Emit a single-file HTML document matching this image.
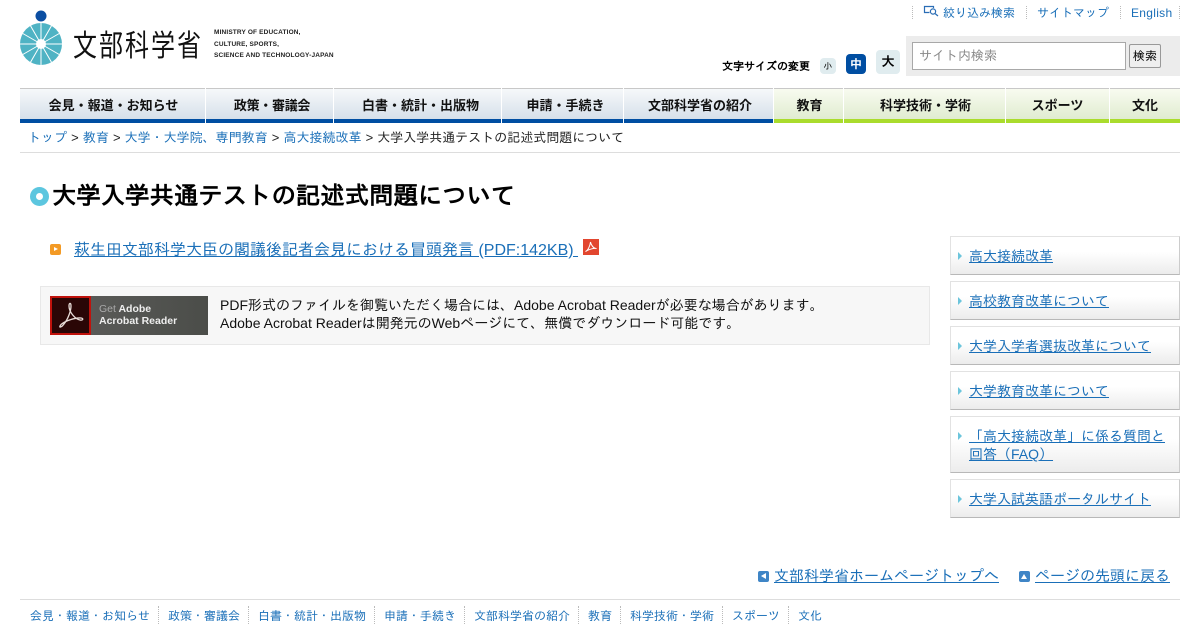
<!DOCTYPE html>
<html lang="ja"><head><meta charset="utf-8"><title>大学入学共通テストの記述式問題について</title>
<style>
*{box-sizing:border-box}
html,body{margin:0;padding:0;background:#fff}
body{width:1200px;height:630px;position:relative;overflow:hidden;font-family:"Liberation Sans","IPAGothic","Noto Sans CJK JP",sans-serif;color:#000}
.a{position:absolute;white-space:nowrap}
a{color:#1a6fb8;text-decoration:underline}
.c{text-decoration:none}
.n{position:absolute;top:88px;height:35px;text-align:center;font-family:"Liberation Sans","Noto Sans CJK JP",sans-serif;font-weight:bold;font-size:13px;line-height:33px;color:#111;border-top:1px solid #c8c8c8;border-bottom:4px solid #004ea2;background:linear-gradient(#f6f8fa,#d6e0ea)}
.g{border-bottom-color:#aadc2d;background:linear-gradient(#f8fbf0,#e0ecd0)}
.s{position:absolute;left:950px;width:230px;border:1px solid #e2e2e2;border-right-color:#ccc;border-bottom:1px solid #b8b8b8;background:linear-gradient(#fff 40%,#ececec);font-size:14px;line-height:18px;padding-left:18px;padding-right:8px;padding-top:10px}
.s:before{content:"";position:absolute;left:7px;top:15px;width:0;height:0;border-left:4px solid #6cc5dc;border-top:4px solid transparent;border-bottom:4px solid transparent}
.f{position:absolute;top:607px;font-size:12px;line-height:18px;white-space:nowrap;color:#1a6fb8}
.d{position:absolute;border-left:1px dotted #bbb}
</style></head><body>

<svg class="a" style="left:18px;top:8px" width="48" height="60" viewBox="18 8 48 60">
<circle cx="41" cy="16" r="5.500" fill="#0b4ea2"/>
<circle cx="41" cy="44" r="21" fill="#4fb3c4"/>
<g stroke="#fff" stroke-width="1">
<path d="M41 23V65M20 44H62M30.500 25.800 51.500 62.200M51.500 25.800 30.500 62.200M22.800 33.500 59.200 54.500M59.200 33.500 22.800 54.500"/></g>
<circle cx="41" cy="44" r="5" fill="#fff"/>
</svg>
<div class="a" style="left:73px;top:22px;font-size:30px;line-height:42px;letter-spacing:2.500px;transform:scaleX(.8);transform-origin:0 0;font-family:'Noto Sans CJK JP',sans-serif;color:#111">文部科学省</div>
<div class="a" style="left:214px;top:27px;font-size:6.500px;line-height:11.500px;font-weight:bold;letter-spacing:.15px;color:#222">MINISTRY OF EDUCATION,<br>CULTURE, SPORTS,<br>SCIENCE AND TECHNOLOGY-JAPAN</div>

<div class="d" style="left:912px;top:6px;height:13px"></div>
<div class="d" style="left:1026px;top:6px;height:13px"></div>
<div class="d" style="left:1120px;top:6px;height:13px"></div>
<div class="d" style="left:1179px;top:6px;height:13px"></div>
<svg class="a" style="left:923px;top:5px" width="18" height="13" viewBox="0 0 18 13" fill="none" stroke="#2a6db5" stroke-width="1.200"><path d="M6.500 7.500H1.500V1.500H10.500V3"/><circle cx="10" cy="6.500" r="2.600"/><path d="M12 8.500 15 11"/></svg>
<div class="a" style="left:943px;top:5px;font-size:12px;line-height:16px;color:#1a6fb8">絞り込み検索</div>
<div class="a" style="left:1037px;top:5px;font-size:12px;line-height:16px;color:#1a6fb8">サイトマップ</div>
<div class="a" style="left:1131px;top:5px;font-size:12px;letter-spacing:.3px;line-height:16px;color:#1a6fb8">English</div>

<div class="a" style="left:722px;top:59px;font-size:11px;line-height:16px;font-weight:bold">文字サイズの変更</div>
<div class="a" style="left:820px;top:58px;width:16px;height:16px;border-radius:4px;background:#e0ecef;font-size:9px;line-height:16px;text-align:center">小</div>
<div class="a" style="left:846px;top:54px;width:20px;height:20px;border-radius:4px;background:#004ea2;color:#fff;font-size:12px;font-weight:bold;line-height:20px;text-align:center">中</div>
<div class="a" style="left:876px;top:50px;width:24px;height:24px;border-radius:4px;background:#e0ecef;font-size:13px;font-weight:bold;line-height:24px;text-align:center">大</div>
<div class="a" style="left:906px;top:36px;width:274px;height:40px;background:#ececec"></div>
<div class="a" style="left:912px;top:42px;width:214px;height:28px;background:#fff;border:1px solid #a8a8a8;font-size:13px;line-height:26px;padding-left:6px;color:#8a8a8a">サイト内検索</div>
<div class="a" style="left:1129px;top:44px;width:32px;height:24px;background:#efefef;border:1px solid #999;border-radius:2px;font-size:12px;line-height:22px;text-align:center">検索</div>

<div class="n" style="left:20px;width:185px;padding-left:2px">会見・報道・お知らせ</div>
<div class="n" style="left:206px;width:127px;padding-left:5px;letter-spacing:-.3px">政策・審議会</div>
<div class="n" style="left:334px;width:167px;padding-left:6px">白書・統計・出版物</div>
<div class="n" style="left:502px;width:121px;padding-left:6px">申請・手続き</div>
<div class="n" style="left:624px;width:149px;padding-left:3px">文部科学省の紹介</div>
<div class="n g" style="left:774px;width:69px;padding-left:2px">教育</div>
<div class="n g" style="left:844px;width:161px;padding-left:2px">科学技術・学術</div>
<div class="n g" style="left:1006px;width:103px">スポーツ</div>
<div class="n g" style="left:1110px;width:70px">文化</div>

<div class="a" style="left:28px;top:129px;font-size:13px;line-height:18px;word-spacing:.5px;color:#222"><a class="c">トップ</a> &gt; <a class="c">教育</a> &gt; <a class="c">大学・大学院、専門教育</a> &gt; <a class="c">高大接続改革</a> &gt; 大学入学共通テストの記述式問題について</div>
<div class="a" style="left:20px;top:152px;width:1160px;height:1px;background:#ddd"></div>

<div class="a" style="left:30px;top:187px;width:19px;height:19px;border-radius:50%;background:#5cc6df"></div>
<div class="a" style="left:36px;top:193px;width:7px;height:7px;border-radius:50%;background:#fff"></div>
<div class="a" style="left:52px;top:180px;font-size:24.400px;line-height:34px;font-weight:bold">大学入学共通テストの記述式問題について</div>

<div class="a" style="left:50px;top:244px;width:11px;height:11px;border-radius:2px;background:#f39a25"></div>
<div class="a" style="left:54px;top:247px;width:0;height:0;border-left:4px solid #fff;border-top:2.500px solid transparent;border-bottom:2.500px solid transparent"></div>
<div class="a" style="left:74px;top:239px;font-size:16px;line-height:23px"><a>萩生田文部科学大臣の閣議後記者会見における冒頭発言 (PDF:142KB)&nbsp;</a></div>
<svg class="a" style="left:583px;top:239px" width="16" height="16" viewBox="0 0 16 16"><rect width="16" height="16" fill="#e2462f"/><path d="M2.500 12.500C5 11.500 7 7 7.500 3c.5 3 3 6.500 6 6.500-3-.5-8 1-11 3Z" fill="none" stroke="#fff" stroke-width="1"/></svg>

<div class="a" style="left:40px;top:286px;width:890px;height:59px;background:#f7f7f7;border:1px solid #e8e8e8"></div>
<div class="a" style="left:50px;top:296px;width:158px;height:39px;background:linear-gradient(90deg,#5e5e5c,#4b4d49)"></div>
<div class="a" style="left:50px;top:296px;width:41px;height:39px;background:#2a0606;border:2px solid #c0120c"></div>
<svg class="a" style="left:53px;top:299px" width="35" height="33" viewBox="0 0 35 33"><path d="M7 27C6 29 9 28 11 25 15 20 18 12 18 7 18 3 16 4 16 7 16 13 22 20 27 21 30 21.500 31 19.500 28 19 22 18.500 12 22 8 25.500Z" fill="none" stroke="#e8dcd8" stroke-width="1.300"/></svg>
<div class="a" style="left:99px;top:303px;font-size:10.500px;line-height:12px;font-weight:bold;color:#eee"><span style="color:#aaa;font-weight:normal">Get</span> Adobe<br>Acrobat Reader</div>
<div class="a" style="left:220px;top:296px;font-size:14px;line-height:18px;color:#111">PDF形式のファイルを御覧いただく場合には、Adobe Acrobat Readerが必要な場合があります。<br>Adobe Acrobat Readerは開発元のWebページにて、無償でダウンロード可能です。</div>

<div class="s" style="top:236px;height:39px"><a>高大接続改革</a></div>
<div class="s" style="top:281px;height:39px"><a>高校教育改革について</a></div>
<div class="s" style="top:326px;height:39px"><a>大学入学者選抜改革について</a></div>
<div class="s" style="top:371px;height:39px"><a>大学教育改革について</a></div>
<div class="s" style="top:416px;height:57px"><a>「高大接続改革」に係る質問と回答（FAQ）</a></div>
<div class="s" style="top:479px;height:39px"><a>大学入試英語ポータルサイト</a></div>

<div class="a" style="left:758px;top:571px;width:11px;height:11px;border-radius:2px;background:#3f85c6"></div>
<div class="a" style="left:761px;top:573px;width:0;height:0;border-right:5px solid #fff;border-top:3.500px solid transparent;border-bottom:3.500px solid transparent"></div>
<div class="a" style="left:774px;top:567px;font-size:15px;line-height:20px"><a>文部科学省ホームページトップへ</a></div>
<div class="a" style="left:1019px;top:571px;width:11px;height:11px;border-radius:2px;background:#3f85c6"></div>
<div class="a" style="left:1021px;top:574px;width:0;height:0;border-bottom:5px solid #fff;border-left:3.500px solid transparent;border-right:3.500px solid transparent"></div>
<div class="a" style="left:1035px;top:567px;font-size:15px;line-height:20px"><a>ページの先頭に戻る</a></div>

<div class="a" style="left:20px;top:599px;width:1160px;height:1px;background:#ddd"></div>
<div class="f" style="left:30px">会見・報道・お知らせ</div>
<div class="f" style="left:168px">政策・審議会</div>
<div class="f" style="left:258px">白書・統計・出版物</div>
<div class="f" style="left:384px">申請・手続き</div>
<div class="f" style="left:474px">文部科学省の紹介</div>
<div class="f" style="left:588px">教育</div>
<div class="f" style="left:630px">科学技術・学術</div>
<div class="f" style="left:732px">スポーツ</div>
<div class="f" style="left:798px">文化</div>
<div class="d" style="left:158px;top:606px;height:18px"></div>
<div class="d" style="left:248px;top:606px;height:18px"></div>
<div class="d" style="left:374px;top:606px;height:18px"></div>
<div class="d" style="left:464px;top:606px;height:18px"></div>
<div class="d" style="left:578px;top:606px;height:18px"></div>
<div class="d" style="left:620px;top:606px;height:18px"></div>
<div class="d" style="left:722px;top:606px;height:18px"></div>
<div class="d" style="left:788px;top:606px;height:18px"></div>
</body></html>
